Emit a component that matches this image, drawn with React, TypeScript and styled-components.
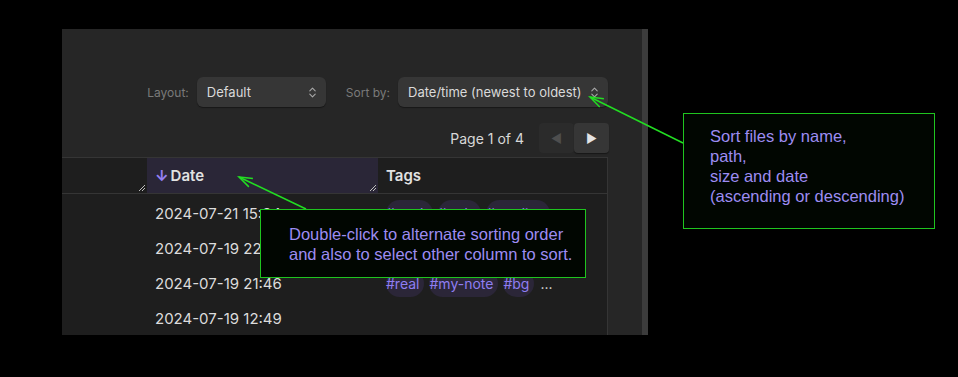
import styled, { createGlobalStyle } from 'styled-components';
import { ChevronsUpDown } from 'lucide-react';
import { Fragment } from 'react';

const GlobalStyle = createGlobalStyle`
  html, body {
    margin: 0;
    padding: 0;
    background: #000;
  }
  body {
    font-family: Inter, "Noto Sans", sans-serif;
  }
`;

const Page = styled.div`
  position: relative;
  width: 958px;
  height: 377px;
  background: #000;
  overflow: hidden;
  padding: 29px 0 0 62px;
  box-sizing: border-box;
`;

const Panel = styled.div`
  display: flex;
  width: 586px;
  height: 306px;
  background: #262626;
`;

const Content = styled.div`
  flex: 1;
  display: flex;
  flex-direction: column;
  padding-top: 48px;
  min-width: 0;
`;

const Scrollbar = styled.div`
  width: 6px;
  background: #3c3c3c;
`;

const Toolbar = styled.div`
  display: flex;
  justify-content: flex-end;
  align-items: center;
  padding-right: 34px;
  height: 30px;
`;

const Label = styled.span`
  font-size: 12px;
  color: #7a7a7a;
  margin-right: 8px;
`;

const Select = styled.div<{ $width: number; $gap?: number }>`
  display: flex;
  align-items: center;
  justify-content: space-between;
  box-sizing: border-box;
  width: ${(p) => p.$width}px;
  height: 30px;
  margin-right: ${(p) => p.$gap ?? 0}px;
  padding: 0 7px 0 10px;
  background: #363636;
  border-radius: 6px;
  box-shadow: 0 1px 1px rgba(0, 0, 0, 0.4);
  color: #dadada;
  font-size: 13px;
  svg {
    color: #a8a8a8;
  }
`;

const Pager = styled.div`
  display: flex;
  justify-content: flex-end;
  align-items: center;
  padding-right: 33px;
  margin-top: 16px;
  height: 30px;
`;

const PageText = styled.span`
  font-size: 14px;
  color: #d8d8d8;
  margin-right: 15px;
`;

const PageButton = styled.div<{ $active?: boolean }>`
  display: flex;
  align-items: center;
  justify-content: center;
  width: 35px;
  height: 30px;
  border-radius: 4px;
  background: ${(p) => (p.$active ? '#363636' : '#2b2b2b')};
  color: ${(p) => (p.$active ? '#e4e4e4' : '#4e4e4e')};
  font-size: 12px;
  box-shadow: ${(p) => (p.$active ? '0 1px 1px rgba(0,0,0,0.4)' : 'none')};
`;

const Table = styled.div`
  margin-top: 4px;
  margin-right: 34px;
  flex: 1;
  background: #1e1e1e;
  border-top: 1px solid #353535;
  border-right: 1px solid #353535;
  display: grid;
  grid-template-columns: 85px 231px 1fr;
  grid-template-rows: 36px;
  grid-auto-rows: 35px;
`;

const HeadCell = styled.div<{ $sorted?: boolean }>`
  position: relative;
  display: flex;
  align-items: center;
  padding-left: 8px;
  border-bottom: 1px solid #353535;
  background: ${(p) => (p.$sorted ? '#2a2637' : '#1e1e1e')};
  color: #e2e2e2;
  font-size: 15px;
  font-weight: 600;
`;

const SortArrow = styled.span`
  color: #9580f5;
  font-weight: 700;
  margin-right: 2px;
`;

const Grip = styled.svg`
  position: absolute;
  right: 2px;
  bottom: 2px;
`;

const Cell = styled.div`
  display: flex;
  align-items: center;
  padding: 3px 0 0 8px;
  font-size: 15px;
  color: #dcdcdc;
  white-space: nowrap;
  overflow: hidden;
  gap: 5px;
`;

const Tag = styled.span`
  display: inline-flex;
  align-items: center;
  height: 27px;
  padding: 0 5px 0 0;
  border-radius: 14px;
  background: #2b2638;
  color: #8f7ef2;
  font-size: 14px;
`;

const More = styled.span`
  color: #dcdcdc;
  font-size: 14px;
  margin-left: 1px;
`;

const Note = styled.div<{ $x: number; $y: number; $w: number; $h: number }>`
  position: absolute;
  left: ${(p) => p.$x}px;
  top: ${(p) => p.$y}px;
  width: ${(p) => p.$w}px;
  height: ${(p) => p.$h}px;
  box-sizing: border-box;
  border: 1px solid #1fc41f;
  background: #010601;
  color: #9d8cf2;
  font-family: "Liberation Sans", Arial, sans-serif;
  font-size: 16.5px;
  line-height: 20px;
`;

const NoteText = styled.div<{ $pl: number; $pt: number }>`
  padding: ${(p) => p.$pt}px 0 0 ${(p) => p.$pl}px;
  white-space: nowrap;
`;

const Arrows = styled.svg`
  position: absolute;
  left: 0;
  top: 0;
  pointer-events: none;
`;

const ResizeGrip = () => (
  <Grip width="7" height="7" viewBox="0 0 7 7">
    <path d="M1 7 L7 1 M4 7 L7 4" stroke="#bdbdbd" strokeWidth="1" />
  </Grip>
);

const rows = [
  { date: '2024-07-21 15:34', tags: ['#work', '#todo', '#reading'] },
  { date: '2024-07-19 22:10', tags: [] },
  { date: '2024-07-19 21:46', tags: ['#real', '#my-note', '#bg'], more: true },
  { date: '2024-07-19 12:49', tags: [] },
];

const Arrow = ({ x1, y1, x2, y2 }: { x1: number; y1: number; x2: number; y2: number }) => {
  const a = Math.atan2(y1 - y2, x1 - x2);
  const len = 14;
  const spread = 0.34;
  const p1 = [x2 + len * Math.cos(a + spread), y2 + len * Math.sin(a + spread)];
  const p2 = [x2 + len * Math.cos(a - spread), y2 + len * Math.sin(a - spread)];
  return (
    <g stroke="#22dd22" strokeWidth="1.5" fill="none">
      <line x1={x1} y1={y1} x2={x2} y2={y2} />
      <polyline points={`${p1[0]},${p1[1]} ${x2},${y2} ${p2[0]},${p2[1]}`} />
    </g>
  );
};

export default function App() {
  return (
    <>
      <GlobalStyle />
      <Page>
        <Panel>
          <Content>
            <Toolbar>
              <Label>Layout:</Label>
              <Select $width={129} $gap={20}>
                Default
                <ChevronsUpDown size={13} strokeWidth={2} />
              </Select>
              <Label>Sort by:</Label>
              <Select $width={210}>
                Date/time (newest to oldest)
                <ChevronsUpDown size={13} strokeWidth={2} />
              </Select>
            </Toolbar>
            <Pager>
              <PageText>Page 1 of 4</PageText>
              <PageButton>◀</PageButton>
              <PageButton $active>▶</PageButton>
            </Pager>
            <Table>
              <HeadCell>
                <ResizeGrip />
              </HeadCell>
              <HeadCell $sorted>
                <SortArrow>↓</SortArrow>Date
                <ResizeGrip />
              </HeadCell>
              <HeadCell>Tags</HeadCell>
              {rows.map((r) => (
                <Fragment key={r.date}>
                  <Cell />
                  <Cell>{r.date}</Cell>
                  <Cell>
                    {r.tags.map((t) => (
                      <Tag key={t}>{t}</Tag>
                    ))}
                    {r.more && <More>...</More>}
                  </Cell>
                </Fragment>
              ))}
            </Table>
          </Content>
          <Scrollbar />
        </Panel>

        <Arrows width="958" height="377">
          <Arrow x1={306} y1={209} x2={239} y2={177} />
          <Arrow x1={683} y1={143} x2={590} y2={97} />
        </Arrows>

        <Note $x={260} $y={209} $w={326} $h={69}>
          <NoteText $pl={28} $pt={14}>
            Double-click to alternate sorting order
            <br />
            and also to select other column to sort.
          </NoteText>
        </Note>
        <Note $x={683} $y={113} $w={252} $h={116}>
          <NoteText $pl={26} $pt={12}>
            Sort files by name,
            <br />
            path,
            <br />
            size and date
            <br />
            (ascending or descending)
          </NoteText>
        </Note>
      </Page>
    </>
  );
}
